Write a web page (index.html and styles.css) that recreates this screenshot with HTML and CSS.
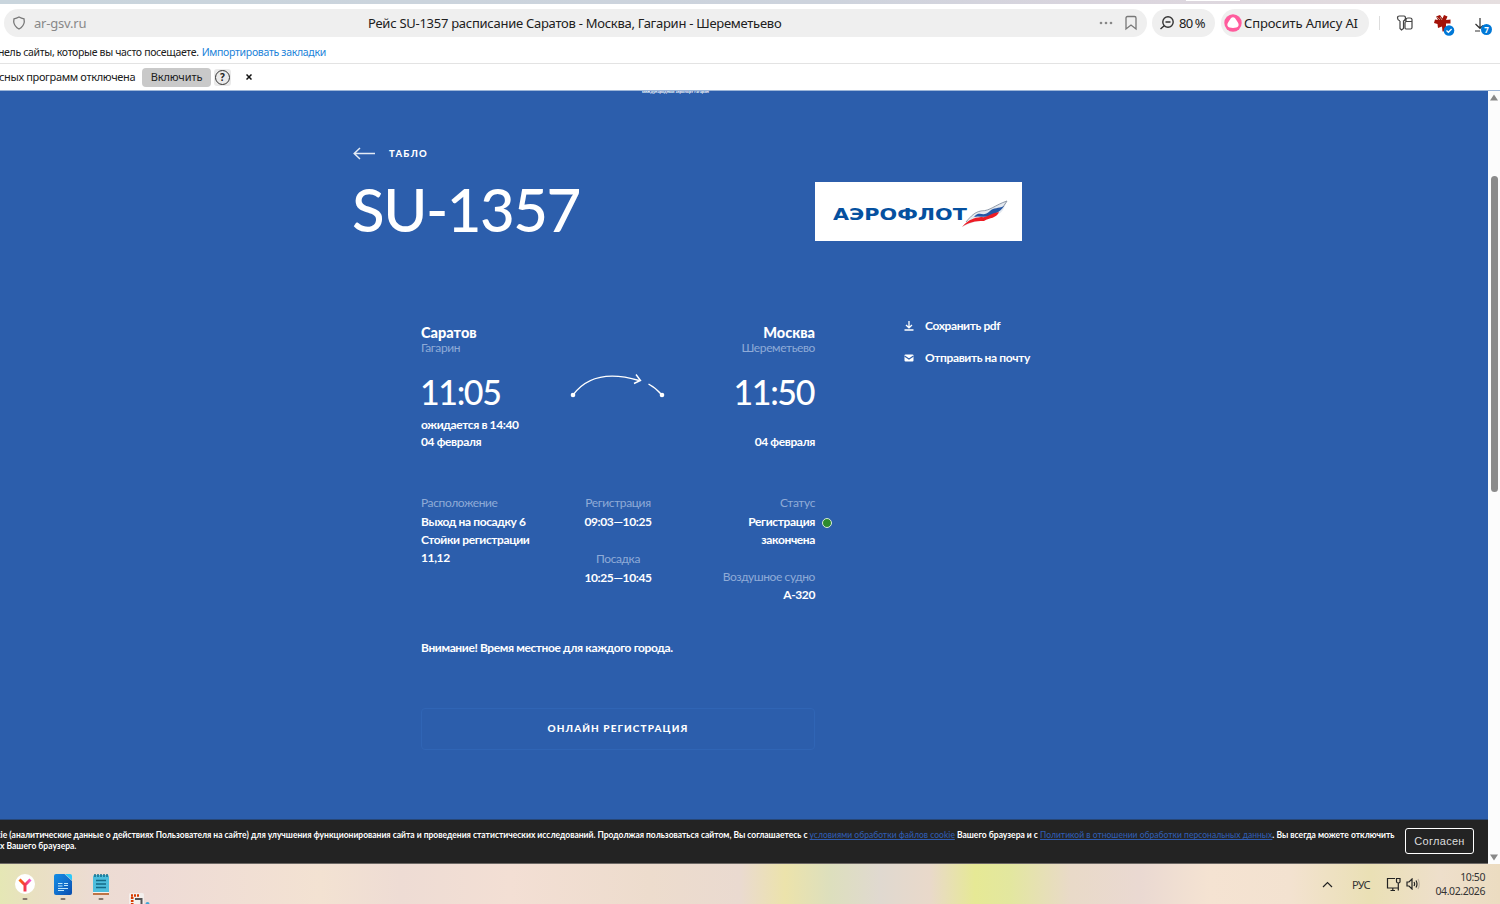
FILE: index.html
```html
<!DOCTYPE html>
<html lang="ru">

<head>
    <meta charset="UTF-8">
    <title>Рейс SU-1357</title>
    <link rel="stylesheet" href="styles.css">
</head>

<body>
    <div class="tabs"><span class="tab"></span></div>
    <header class="toolbar">
        <div class="address">
            <svg class="shield" width="14" height="14" viewBox="0 0 14 14"><path d="M7 1 Q9.500 2.300 12 2.800 L12.300 6 Q11.500 10.800 7 13 Q2.500 10.800 1.700 6 L2 2.800 Q4.500 2.300 7 1 Z"/></svg>
            <span class="domain">ar-gsv.ru</span>
            <span class="page-title">Рейс SU-1357 расписание Саратов - Москва, Гагарин - Шереметьево</span>
            <svg class="dots" width="14" height="4" viewBox="0 0 14 4"><circle cx="2" cy="2" r="1.300"/><circle cx="7" cy="2" r="1.300"/><circle cx="12" cy="2" r="1.300"/></svg>
            <svg class="bookmark" width="14" height="16" viewBox="0 0 14 16"><path d="M2 3 Q2 1.500 3.500 1.500 H10.500 Q12 1.500 12 3 V14 L7 10 L2 14 Z"/></svg>
        </div>
        <div class="pill zoom">
            <svg width="16" height="16" viewBox="0 0 16 16"><circle cx="9" cy="7" r="5.200"/><path d="M5.200 10.800 L1.500 14 M6.500 7 H11.500"/></svg>
            <span>80 %</span>
        </div>
        <div class="pill alice">
            <svg width="18" height="18" viewBox="0 0 18 18"><circle cx="9" cy="9" r="8.700" fill="#ff5c9d"/><path d="M9 3.300 C10.700 3.300 11.600 4.900 12.800 6.800 C14.200 9 15.100 10.400 14.400 12 C13.600 13.800 11.400 13.900 9 13.900 S4.400 13.800 3.600 12 C2.900 10.400 3.800 9 5.200 6.800 C6.400 4.900 7.300 3.300 9 3.300 Z" fill="#fff"/></svg>
            <span>Спросить Алису AI</span>
        </div>
        <span class="divider"></span>
        <svg class="keys" width="18" height="18" viewBox="0 0 18 18"><path d="M4 7 V14.500 L5.500 16 L7.500 14.500 V7 Q9 6.500 9.500 4.500 Q9.500 2 8 2 H3.500 Q1.500 2 1.500 4 Q1.500 6 4 7 M10 7.500 V5.500 Q10 4 12 4 H14 Q16 4 16 5.500 V13.500 Q16 15 14.500 15 H10 Q9 15 9 13.500 V9 Q9 7.500 10.500 7.500 H16"/></svg>
        <svg class="ext" width="22" height="22" viewBox="0 0 22 22"><path d="M7 1 L9.500 4.500 L11 1 L14.500 2.500 L13 6 L17.500 5.500 L17.500 9.500 L13 9.500 L13 13 L14 17 L9.500 17.500 L9 12.500 L5 14 L4.500 10 L1 9 L2 5.500 L5 6 L3 2.500 Z" fill="#a31208"/><path d="M3 2 L7 6 M7 3 L9 6" stroke="#b78f87"/><circle cx="16" cy="16.500" r="5.300" fill="#0078d7"/><path d="M13.500 16.500 L15.400 18.300 L18.600 15" fill="none" stroke="#fff" stroke-width="1.300"/></svg>
        <div class="download">
            <svg width="12" height="14" viewBox="0 0 12 14"><path d="M6 0 V10 M1.500 6 L6 10.300 L9 7.500 M1 13 H6"/></svg>
            <span class="count">7</span>
        </div>
    </header>
    <div class="bookmarks">
        <span class="bookmarks-text">нель сайты, которые вы часто посещаете.</span>
        <a class="import">Импортировать закладки</a>
    </div>
    <div class="notice">
        <span class="notice-text">сных программ отключена</span>
        <span class="enable">Включить</span>
        <span class="help"><span>?</span></span>
        <svg class="close" width="6" height="6" viewBox="0 0 6 6"><path d="M.5 .5 L5.500 5.500 M5.500 .5 L.5 5.500"/></svg>
    </div>

    <div class="viewport">
        <main class="page">
            <div class="site-name">международный аэропорт гагарин</div>
            <div class="content">
                <div class="back">
                    <svg width="23" height="14" viewBox="0 0 23 14"><path d="M22 7.500 H1.500 M7 2 L1.200 7.500 L7 13"/></svg>
                    <span>ТАБЛО</span>
                </div>
                <div class="flight">
                    <h1>SU-1357</h1>
                    <div class="logo">
                        <span class="logo-text">АЭРОФЛОТ</span>
                        <svg width="48" height="30" viewBox="0 0 48 30">
                            <path d="M1 28 C8 22 10 16 18 13 C29 13 34 6 46 2 C43 9 42 14 35 16 C27 22 17 20 1 28 Z" fill="#e3e8ef"/>
                            <path d="M5 23 C10 17 14 13 20 12 C29 12 34 6 46 2 L42 8" fill="none" stroke="#8e99a8"/>
                            <path d="M13 18 C19 11 22 19 29 12 C33 8 37 10 43 7 C40 12 37 13 32 16 C25 20 18 16 13 18 Z" fill="#2456a5"/>
                            <path d="M1 28 C8 20 13 19 20 18 C27 19 27 15 38 13 C35 20 29 18 23 22 C14 22 8 23 1 28 Z" fill="#ee1c25"/>
                        </svg>
                    </div>
                </div>
                <div class="info">
                    <div class="details">
                        <div class="route">
                            <div class="point">
                                <div class="city">Саратов</div>
                                <div class="airport">Гагарин</div>
                                <div class="time">11:05</div>
                                <div class="expected">ожидается в 14:40</div>
                                <div class="date">04 февраля</div>
                            </div>
                            <svg class="arc" width="96" height="28" viewBox="0 0 96 28"><path d="M3 22 C20 -1 47 1 69 7.500 M66 1.500 L70.500 7.500 L64 10.500 M78.500 11 Q86 15 92 22"/><circle cx="3" cy="22" r="2.300"/><circle cx="92" cy="22" r="2.300"/></svg>
                            <div class="point right">
                                <div class="city">Москва</div>
                                <div class="airport">Шереметьево</div>
                                <div class="time">11:50</div>
                                <div class="expected"></div>
                                <div class="date">04 февраля</div>
                            </div>
                        </div>
                        <div class="params">
                            <div class="param">
                                <div class="label">Расположение</div>
                                <div class="value">Выход на посадку 6<br>Стойки регистрации<br>11,12</div>
                            </div>
                            <div class="param center">
                                <div class="label">Регистрация</div>
                                <div class="value">09:03—10:25</div>
                                <div class="label second">Посадка</div>
                                <div class="value">10:25—10:45</div>
                            </div>
                            <div class="param right">
                                <div class="label">Статус</div>
                                <div class="value status">Регистрация<br>закончена</div>
                                <div class="label second">Воздушное судно</div>
                                <div class="value plane">A-320</div>
                            </div>
                        </div>
                        <div class="warning">Внимание! Время местное для каждого города.</div>
                        <div class="online">ОНЛАЙН РЕГИСТРАЦИЯ</div>
                    </div>
                    <div class="actions">
                        <div class="action">
                            <svg width="10" height="10" viewBox="0 0 10 10"><path d="M5 0 V6.500 M2 4 L5 6.800 L8 4 M.5 9 H9.500" fill="none" stroke="#fff" stroke-width="1.300"/></svg>
                            <span>Сохранить pdf</span>
                        </div>
                        <div class="action">
                            <svg width="10" height="10" viewBox="0 0 10 10"><rect x=".5" y="1.500" width="9" height="7" rx="1" fill="#fff"/><path d="M.5 3 L5 6 L9.500 3" fill="none" stroke="#2c5eac" stroke-width="1.200"/></svg>
                            <span>Отправить на почту</span>
                        </div>
                    </div>
                </div>
            </div>
            <div class="cookies">
                <div class="cookies-text"><div class="line"><span class="start">kie (аналитические данные о действиях Пользователя на сайте) для улучшения функционирования сайта и проведения статистических исследований. Продолжая пользоваться сайтом, Вы соглашаетесь с </span><a>условиями обработки файлов cookie</a><span> Вашего браузера и с </span><a>Политикой в отношении обработки персональных данных</a><span>. Вы всегда можете отключить</span></div><div class="line">х Вашего браузера.</div></div>
                <span class="agree">Согласен</span>
            </div>
        </main>
        <div class="scrollbar">
            <svg width="8" height="7" viewBox="0 0 8 7"><path d="M4 .5 L8 6.500 H0 Z"/></svg>
            <span class="thumb"></span>
            <svg class="down" width="8" height="7" viewBox="0 0 8 7"><path d="M4 6.500 L0 .5 H8 Z"/></svg>
        </div>
    </div>

    <footer class="taskbar">
        <div class="apps">
            <svg width="20" height="28" viewBox="0 0 20 28"><defs><linearGradient id="ya" gradientUnits="userSpaceOnUse" x1="4" x2="16" y1="0" y2="0"><stop offset="0" stop-color="#ff6a00"/><stop offset=".5" stop-color="#f3364c"/><stop offset="1" stop-color="#f35ad8"/></linearGradient></defs><circle cx="10" cy="10" r="10" fill="#fff"/><path d="M4.500 5.500 L10 11 M15.500 5.500 L10 11 V17.500" fill="none" stroke="url(#ya)" stroke-width="3"/><rect x="7.500" y="24" width="5" height="2" rx="1" fill="#85776c"/></svg>
            <svg width="18" height="28" viewBox="0 0 18 28"><defs><linearGradient id="doc" x1="0" x2="1" y1="0" y2="1"><stop offset="0" stop-color="#128de5"/><stop offset=".5" stop-color="#1171ce"/><stop offset="1" stop-color="#084cad"/></linearGradient></defs><path d="M2 0 H10.500 L18 7 V19 Q18 21 16 21 H2 Q0 21 0 19 V2 Q0 0 2 0 Z" fill="url(#doc)"/><path d="M11 0 H16 Q18 0 18 2 V6.500 Z" fill="#2ac8fa"/><path d="M4 9.500 H8.500 M4 12 H8.500 M4 14.500 H14 M4 16.500 H10 M10 9.500 H14 M10 11.500 H14" fill="none" stroke="#c0e7fb" stroke-width="1"/><rect x="6.500" y="24" width="5" height="2" rx="1" fill="#85776c"/></svg>
            <svg width="18" height="28" viewBox="0 0 18 28"><rect x="1" y="1" width="16" height="18" rx="1.500" fill="#4dbddc"/><path d="M3 0 V3 M6 0 V3 M9 0 V3 M12 0 V3 M15 0 V3" stroke="#136d8c" stroke-width="1.500"/><path d="M4 6.500 H14 M4 10 H14 M4 13.500 H14" stroke="#146a86" stroke-width="1.300"/><rect x="1" y="18" width="16" height="1" fill="#f7f2ee"/><rect x="1" y="19" width="16" height="2" fill="#bd7345"/><rect x="6.500" y="24" width="5" height="2" rx="1" fill="#85776c"/></svg>
            <svg class="snip" width="21" height="11" viewBox="0 0 21 11"><rect width="15" height="13" rx="1.500" fill="#f3efed"/><path d="M2 2.500 H11" stroke="#d83b01" stroke-width="2.600" stroke-dasharray="2 1"/><path d="M3.200 4 V11" stroke="#d83b01" stroke-width="2.600" stroke-dasharray="2 1"/><path d="M6 6 H12.500 V11" fill="none" stroke="#555" stroke-width="2"/><circle cx="18.500" cy="11" r="2" fill="#3fa6d8"/></svg>
        </div>
        <div class="tray">
            <svg class="chevron" width="11" height="7" viewBox="0 0 11 7"><path d="M1 6 L5.500 1.500 L10 6"/></svg>
            <span class="lang">РУС</span>
            <svg class="network" width="15" height="15" viewBox="0 0 15 15"><path d="M9 1.500 H1.500 V11 H12 M4.500 13.500 H9 M6.800 11 V13.500 M10.500 1.500 H14 V5 Q13.500 6 12.300 6 Q10.500 6 10.500 4.500 Z M12.300 6 V13.500"/></svg>
            <svg class="sound" width="14" height="12" viewBox="0 0 14 12"><path d="M1 4 H3 L6 1 V11 L3 8 H1 Z M8 4 Q9.200 6 8 8 M10 2.500 Q12 6 10 9.500"/><path class="wave" d="M12 1 Q14.500 6 12 11"/></svg>
            <div class="clock">10:50<br><span>04.02.2026</span></div>
        </div>
    </footer>
</body>

</html>
```
FILE: styles.css
```css
* {
    box-sizing: border-box;
}

body {
    margin: 0;
    width: 1500px;
    height: 904px;
    display: flex;
    flex-direction: column;
    overflow: hidden;
    font-family: "Noto Sans", sans-serif;
    color: #202020;
    background: #fff;
}

svg {
    display: block;
    flex: none;
}

span, a {
    white-space: nowrap;
}

/* browser */
.tabs {
    height: 4px;
    flex: none;
    padding-left: 1186px;
    background: linear-gradient(90deg, #c9d5dd, #cdd3dd 55%, #dbd5de 75%, #e6dfe0);
}

.tab {
    display: block;
    width: 54px;
    height: 1px;
    background: #fff;
}

.toolbar {
    height: 38px;
    flex: none;
    display: flex;
    align-items: center;
    padding-left: 4px;
    font-size: 13px;
}

.address {
    width: 1143px;
    height: 28px;
    display: flex;
    align-items: center;
    padding: 0 9px 0 8px;
    border-radius: 14px;
    background: #efefef;
}

.address svg {
    fill: none;
    stroke: #777;
    stroke-width: 1.3;
}

.address .dots {
    fill: #888;
    stroke: none;
}

.domain {
    width: 342px;
    flex: none;
    padding-left: 8px;
    color: #888;
    letter-spacing: -0.2px;
}

.page-title {
    width: 731px;
    flex: none;
    letter-spacing: -0.27px;
}

.address .bookmark {
    margin-left: 11px;
}

.pill {
    height: 28px;
    display: flex;
    align-items: center;
    border-radius: 14px;
    background: #efefef;
}

.zoom {
    width: 63px;
    margin-left: 5px;
    padding-left: 7px;
    gap: 4px;
    letter-spacing: -0.8px;
}

.zoom svg {
    fill: none;
    stroke: #333;
    stroke-width: 1.4;
}

.alice {
    width: 148px;
    margin-left: 6px;
    padding-left: 3px;
    gap: 2px;
    letter-spacing: -0.12px;
}

.divider {
    width: 1px;
    height: 14px;
    margin-left: 10px;
    background: #ddd;
}

.keys {
    margin-left: 16px;
    fill: none;
    stroke: #444;
    stroke-width: 1.2;
}

.ext {
    margin: 3px 0 0 19px;
}

.download {
    display: flex;
    margin-left: 19px;
    padding-top: 6px;
}

.download svg {
    fill: none;
    stroke: #333;
    stroke-width: 1.2;
}

.count {
    width: 11px;
    height: 11px;
    margin: 6px 0 0 -5px;
    border-radius: 6px;
    background: #0078d7;
    color: #fff;
    font-size: 8px;
    font-weight: bold;
    line-height: 11px;
    text-align: center;
}

.bookmarks {
    height: 22px;
    flex: none;
    display: flex;
    gap: 3px;
    border-bottom: 1px solid #e3e3e3;
    font-size: 10.5px;
    line-height: 20px;
}

.bookmarks-text {
    margin-left: -2px;
    letter-spacing: -0.33px;
}

.import {
    color: #1b83d9;
    letter-spacing: -0.3px;
}

.notice {
    height: 27px;
    flex: none;
    display: flex;
    align-items: center;
    border-bottom: 1px solid #9db6d8;
    font-size: 11px;
    line-height: 18px;
}

.notice-text {
    width: 142px;
    margin-left: -1px;
    letter-spacing: -0.35px;
}

.enable {
    width: 69px;
    height: 19px;
    margin-left: 1px;
    border-radius: 4px;
    background: #c9c9c9;
    letter-spacing: -0.1px;
    text-align: center;
}

.help {
    width: 17px;
    height: 17px;
    margin-left: 3px;
    padding: 1px;
    border-radius: 3px;
    background: #eaeaea;
}

.help span {
    display: block;
    height: 15px;
    border: 1px solid #333;
    border-radius: 8px;
    font-size: 10px;
    font-weight: bold;
    line-height: 13px;
    text-align: center;
}

.close {
    margin-left: 15px;
    stroke: #111;
    stroke-width: 1.5;
}

.viewport {
    height: 773px;
    flex: none;
    display: flex;
}

/* site */
.page {
    width: 1488px;
    display: flex;
    flex-direction: column;
    overflow: hidden;
    background: #2c5eac;
    color: #fff;
    font-family: Lato, sans-serif;
}

.site-name {
    height: 2px;
    padding-left: 642px;
    font-size: 4.1px;
    font-weight: bold;
    line-height: 1px;
}

.content {
    height: 726px;
    flex: none;
    padding: 53px 0 0 353px;
}

.back {
    height: 14px;
    display: flex;
    align-items: center;
    gap: 13px;
    font-size: 9.5px;
    font-weight: 900;
    letter-spacing: 1.3px;
}

.back svg {
    fill: none;
    stroke: #e4ebf5;
    stroke-width: 1.5;
}

.flight {
    height: 60px;
    display: flex;
    margin-top: 22px;
}

h1 {
    width: 463px;
    margin: -3px 0 0 -1px;
    font-size: 60px;
    font-weight: 500;
    letter-spacing: -1.5px;
    line-height: 60px;
}

.logo {
    width: 207px;
    height: 59px;
    display: flex;
    align-items: center;
    padding: 5px 0 0 18px;
    background: #fff;
}

.logo-text {
    width: 128px;
    padding-top: 2px;
    color: #05509f;
    font-family: "DejaVu Sans", sans-serif;
    font-size: 15.5px;
    font-weight: bold;
    transform: scaleX(1.34);
    transform-origin: left;
}

.info {
    display: flex;
    margin-top: 76px;
    padding-left: 68px;
    font-size: 12px;
    font-weight: bold;
    letter-spacing: -0.39px;
}

.details {
    width: 394px;
    flex: none;
}

.route {
    display: flex;
    justify-content: space-between;
}

.point {
    width: 140px;
    padding-top: 6px;
}

.right {
    text-align: right;
}

.city {
    font-size: 14.5px;
    font-weight: 900;
    letter-spacing: 0;
    line-height: 17px;
}

.airport, .label {
    color: #8fabd7;
    font-weight: normal;
}

.airport {
    line-height: 14px;
}

.time {
    margin-top: 19px;
    font-size: 34px;
    font-weight: 500;
    letter-spacing: -1.4px;
    line-height: 36px;
}

.point .time {
    margin-left: -1px;
}

.right .time {
    padding-right: 1px;
}

.expected {
    height: 17px;
    margin-top: 6px;
    line-height: 17px;
}

.date {
    line-height: 17px;
}

.arc {
    margin: 55px 9px 0 8px;
    fill: none;
    stroke: #fff;
    stroke-width: 1.4;
}

.arc circle {
    fill: #fff;
    stroke: none;
}

.params {
    height: 110px;
    display: flex;
    justify-content: space-between;
    margin-top: 44px;
}

.param {
    width: 131px;
    line-height: 18px;
}

.center {
    text-align: center;
}

.label {
    height: 19px;
}

.second {
    margin-top: 19px;
}

.param .plane {
    margin-top: -1px;
}

.status {
    position: relative;
}

.status::after {
    content: "";
    position: absolute;
    top: 5px;
    right: -17px;
    width: 8px;
    height: 8px;
    border: 1px solid #d9ead9;
    border-radius: 50%;
    background: #2e8b2e;
}

.warning {
    margin-top: 35px;
    line-height: 18px;
    white-space: nowrap;
}

.online {
    height: 42px;
    margin-top: 51px;
    border: 1px solid #3065b5;
    border-radius: 4px;
    font-size: 10px;
    font-weight: 900;
    letter-spacing: 1.08px;
    line-height: 39px;
    text-align: center;
}

.actions {
    padding-left: 89px;
}

.action {
    height: 16px;
    display: flex;
    align-items: center;
    gap: 11px;
    margin: -1px 0 17px;
}

.action svg {
    margin-top: 2px;
}

.cookies {
    height: 45px;
    flex: none;
    display: flex;
    border-top: 1px solid #274676;
    border-bottom: 1px solid #6c6865;
    background: #232323;
    font-size: 8.5px;
    font-weight: bold;
    line-height: 11px;
}

.cookies-text {
    width: 1405px;
    padding-top: 10px;
}

.line {
    white-space: pre;
}

.line span, .line a {
    white-space: pre;
}

.start {
    margin-left: -4px;
    letter-spacing: -0.012px;
}

.line a {
    color: #2f5cb0;
    font-weight: 500;
    letter-spacing: 0.01px;
    text-decoration: underline;
}

.agree {
    width: 69px;
    height: 26px;
    margin-top: 8px;
    border: 1px solid #fff;
    border-radius: 3px;
    color: #ddd;
    font-family: "Liberation Sans", sans-serif;
    font-size: 11px;
    font-weight: normal;
    letter-spacing: 0.3px;
    line-height: 24px;
    text-align: center;
}

.scrollbar {
    width: 12px;
    display: flex;
    flex-direction: column;
    align-items: center;
    padding: 3px 0 3px;
    background: #fcfcfc;
}

.scrollbar svg {
    fill: #888;
}

.thumb {
    width: 7px;
    height: 316px;
    margin-top: 75px;
    border-radius: 4px;
    background: #8b8b8b;
}

.scrollbar .down {
    margin-top: auto;
}

/* taskbar */
.taskbar {
    height: 40px;
    flex: none;
    display: flex;
    justify-content: space-between;
    background: linear-gradient(90deg, #e5e7b5 0, #e9e0c2 35px, #ecdcd2 90px, #eedbd6 150px, #f3e2d2 320px, #eedcd4 400px, #f3dfd4 510px, #eddccd 650px, #eadad0 740px, #ece3ab 785px, #dddfbd 830px, #e0d9d0 880px, #e9d9ca 930px, #e6e995 975px, #e3e79f 1010px, #e9dac8 1070px, #ead9d2 1140px, #f5e3d2 1210px, #f3e2d0 1290px, #eae0b5 1370px, #eedfcb 1440px, #ecdcc1 1500px);
}

.apps {
    display: flex;
    padding: 10px 0 0 15px;
}

.apps svg {
    margin-right: 20px;
}

.apps svg:first-child {
    margin-right: 19px;
}

.apps .snip {
    margin: 19px 0 0 -1px;
}

.tray {
    display: flex;
    align-items: center;
    padding-right: 15px;
    font-size: 11px;
    color: #333;
}

.tray svg {
    fill: none;
    stroke: #222;
    stroke-width: 1.2;
}

.lang {
    width: 35px;
    margin-left: 19px;
    letter-spacing: -0.6px;
}

.tray .network {
    margin-left: -1px;
}

.sound {
    margin-left: 5px;
}

.sound .wave {
    stroke: #bbae9e;
}

.clock {
    width: 65px;
    font-size: 10.5px;
    letter-spacing: -0.42px;
    line-height: 14px;
    text-align: right;
}
```
